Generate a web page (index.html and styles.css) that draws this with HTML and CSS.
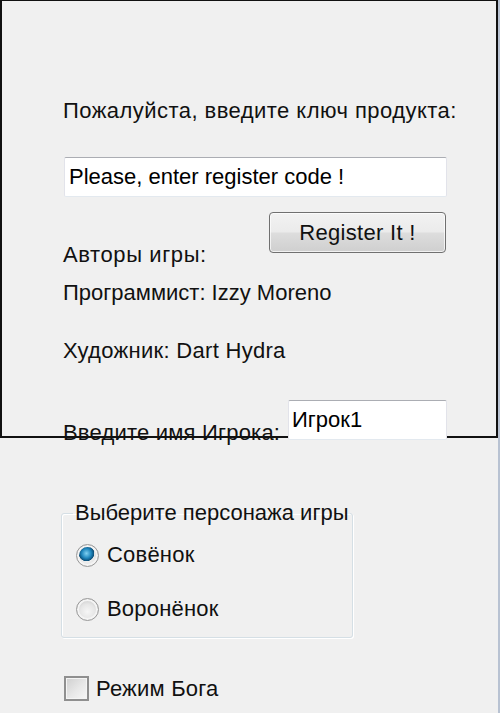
FILE: index.html
```html
<!DOCTYPE html>
<html lang="ru">
<head>
<meta charset="UTF-8" />
<meta name="viewport" content="width=device-width, initial-scale=1" />
<title>Регистрация</title>
<link rel="stylesheet" href="styles.css">
</head>
<body>
<div class="window">
    <div class="panel">
        <p class="line prompt">Пожалуйста, введите ключ продукта:</p>
        <input class="textbox code" type="text" value="Please, enter register code !" />

        <div class="authors-row">
            <span class="line authors">Авторы игры:</span>
            <button class="register">Register It !</button>
        </div>

        <p class="line coder">Программист: Izzy Moreno</p>
        <p class="line artist">Художник: Dart Hydra</p>

        <div class="name-row">
            <label class="line name-label" for="playerName">Введите имя Игрока:</label>
            <input class="textbox name" id="playerName" type="text" value="Игрок1" />
        </div>
    </div>

    <fieldset class="hero-box">
        <legend class="line">Выберите персонажа игры</legend>
        <label class="option first">
            <input type="radio" name="hero" checked />
            <span class="line">Совёнок</span>
        </label>
        <label class="option">
            <input type="radio" name="hero" />
            <span class="line">Воронёнок</span>
        </label>
    </fieldset>

    <label class="god-mode">
        <input type="checkbox" />
        <span class="line">Режим Бога</span>
    </label>
</div>
</body>
</html>
```

FILE: styles.css
```css
* {
box-sizing: border-box;
}

html, body {
margin: 0;
height: 100%;
background: #f0f0f0;
}

body {
font-family: 'Liberation Sans', Arial, sans-serif;
font-size: 22px;
letter-spacing: 0.2px;
color: #111;
overflow: hidden;
}

.window {
width: 500px;
height: 713px;
border-right: 2px solid #b8c2d2;
}

.line {
line-height: 24px;
}

/* верхняя панель с рамкой */
.panel {
height: 438px;
border: 2px solid #111;
border-top-width: 1px;
padding: 98px 0 0 61px;
width: 498px;
}

.panel p {
margin: 0;
}

.prompt {
letter-spacing: 0.45px;
}

.textbox {
display: block;
height: 40px;
font: inherit;
letter-spacing: 0;
color: #000;
background: #fff;
border: 1px solid #e2e3ea;
border-top-color: #abadb3;
border-bottom-color: #e3e9ef;
border-radius: 2px;
padding: 0 4px;
outline: none;
position: relative;
}

.code {
margin: 34px 0 0 1px;
width: 383px;
}

.authors-row {
display: flex;
justify-content: space-between;
align-items: flex-start;
width: 383px;
margin-top: 15px;
}

.authors {
margin-top: 31px;
letter-spacing: 0.6px;
}

.register {
width: 177px;
height: 41px;
font: inherit;
letter-spacing: 0.3px;
color: #111;
border: 1px solid #707070;
border-radius: 4px;
background: linear-gradient(#f2f2f2 0%, #ebebeb 48%, #dddddd 52%, #cfcfcf 100%);
box-shadow: inset 0 0 0 1px rgba(255, 255, 255, 0.7);
padding: 0;
}

.coder {
margin-top: 14px !important;
letter-spacing: 0;
}

.artist {
margin-top: 34px !important;
letter-spacing: 0.3px;
}

.name-row {
display: flex;
justify-content: space-between;
align-items: flex-start;
width: 384px;
margin-top: 37px;
}

.name-label {
margin-top: 21px;
}

.name {
width: 159px;
padding-left: 3px;
}

/* группа выбора персонажа */
.hero-box {
margin: 63px 0 0 61px;
width: 292px;
border: 1px solid #d5dfe5;
border-radius: 3px;
box-shadow: 1px 1px 0 #fff, inset 1px 1px 0 #fff;
padding: 0 0 16px 13px;
}

.hero-box legend {
padding: 0 2px;
margin-left: -2px;
white-space: nowrap;
letter-spacing: 0;
}

.option {
display: flex;
align-items: center;
gap: 8px;
margin-top: 30px;
}

.option.first {
margin-top: 18px;
}

.option input {
appearance: none;
-webkit-appearance: none;
width: 23px;
height: 23px;
margin: 0 0 0 1px;
border-radius: 50%;
border: 1px solid #9a9a9a;
background: radial-gradient(circle at 50% 60%, #f6f6f6 0%, #e6e6e6 45%, #cfcfcf 75%);
box-shadow: inset 0 0 0 2px #f4f4f4;
}

.option input:checked {
background:
    radial-gradient(circle at 45% 40%, #7fd0f2 0%, #1f86bd 28%, #0d4f78 44%, transparent 47%),
    radial-gradient(circle at 50% 60%, #f6f6f6 0%, #e6e6e6 45%, #cfcfcf 75%);
}

.god-mode {
display: flex;
align-items: center;
gap: 7px;
margin: 38px 0 0 64px;
}

.god-mode input {
appearance: none;
-webkit-appearance: none;
width: 25px;
height: 25px;
margin: 0;
border: 2px solid #8f8f8f;
background: linear-gradient(135deg, #cfcfcf 0%, #e8e8e8 55%, #f7f7f7 100%);
box-shadow: inset 0 0 0 1px #f4f4f4;
}
```
